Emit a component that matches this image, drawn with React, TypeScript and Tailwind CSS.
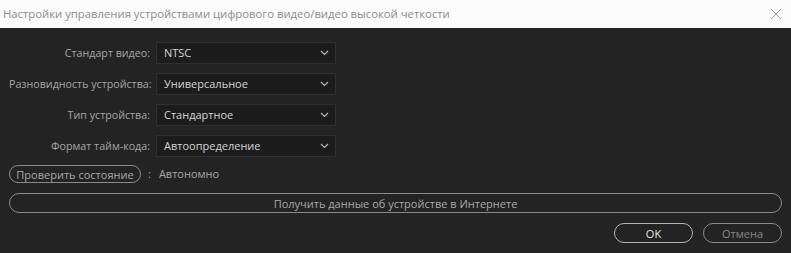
import * as React from "react";

const FIELDS = [
  { label: "Стандарт видео:", value: "NTSC" },
  { label: "Разновидность устройства:", value: "Универсальное" },
  { label: "Тип устройства:", value: "Стандартное" },
  { label: "Формат тайм-кода:", value: "Автоопределение" },
];

function Chevron() {
  return (
    <svg width="9" height="6" viewBox="0 0 9 6" className="text-[#b5b5b5]">
      <path d="M1 1l3.5 3.5L8 1" fill="none" stroke="currentColor" strokeWidth="1.2" />
    </svg>
  );
}

function Pill({ children, className = "" }: { children: React.ReactNode; className?: string }) {
  return (
    <button
      className={
        "flex items-center justify-center whitespace-nowrap rounded-full border border-[#8a8a8a] bg-transparent text-[11px] leading-none " +
        className
      }
    >
      {children}
    </button>
  );
}

export default function App() {
  return (
    <div
      className="flex h-[253px] w-[791px] flex-col bg-[#232323]"
      style={{ fontFamily: '"Open Sans", "Noto Sans", sans-serif' }}
    >
      {/* Заголовок окна */}
      <div className="flex h-[28px] items-center justify-between bg-[#fbfbfb] pl-[3px] pr-[9px]">
        <span className="text-[11.3px] text-[#8c8c8c]">
          Настройки управления устройствами цифрового видео/видео высокой четкости
        </span>
        <svg width="12" height="12" viewBox="0 0 12 12" className="text-[#9a9a9a]">
          <path d="M1 1l10 10M11 1L1 11" stroke="currentColor" strokeWidth="1" />
        </svg>
      </div>

      <div className="flex flex-col px-[9px] pt-[14px]">
        <div className="flex flex-col gap-[9px]">
          {FIELDS.map((f) => (
            <div key={f.label} className="flex items-center">
              <span className="w-[141px] whitespace-nowrap text-right text-[10.7px] text-[#a6a6a6]">{f.label}</span>
              <div className="ml-[6px] flex h-[22px] w-[180px] items-center justify-between border border-[#2f2f2f] bg-[#1c1c1c] pl-[7px] pr-[6px]">
                <span className="text-[11px] text-[#d4d4d4]">{f.value}</span>
                <Chevron />
              </div>
            </div>
          ))}
        </div>

        <div className="mt-[8px] flex items-center">
          <Pill className="h-[18px] w-[132px] text-[#a9a9a9]">Проверить состояние</Pill>
          <span className="ml-[7px] text-[11px] text-[#a6a6a6]">:</span>
          <span className="ml-[8px] text-[11px] text-[#a6a6a6]">Автономно</span>
        </div>

        <Pill className="mt-[10px] h-[20px] w-full text-[#a9a9a9]">Получить данные об устройстве в Интернете</Pill>

        <div className="mt-[10px] flex justify-end gap-[10px]">
          <Pill className="h-[20px] w-[79px] border-[#b5b5b5] text-[#e0e0e0]">OK</Pill>
          <Pill className="h-[20px] w-[79px] text-[#8a8a8a]">Отмена</Pill>
        </div>
      </div>
    </div>
  );
}
